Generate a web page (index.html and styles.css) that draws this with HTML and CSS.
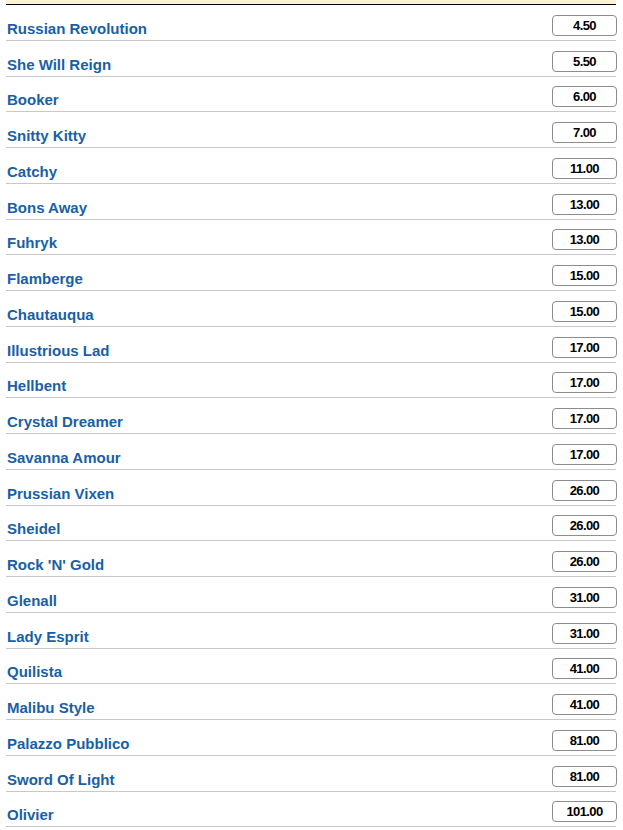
FILE: index.html
```html
<!DOCTYPE html>
<html lang="en">
<head>
    <meta charset="UTF-8">
    <meta name="viewport" content="width=device-width, initial-scale=1.0">
    <title>Runners</title>
    <link rel="stylesheet" href="styles.css">
</head>
<body>
    <div class="board">
        <div class="board-top"></div>
        <div class="runner"><span class="name">Russian Revolution</span><span class="odds">4.50</span></div>
        <div class="runner"><span class="name">She Will Reign</span><span class="odds">5.50</span></div>
        <div class="runner"><span class="name">Booker</span><span class="odds">6.00</span></div>
        <div class="runner"><span class="name">Snitty Kitty</span><span class="odds">7.00</span></div>
        <div class="runner"><span class="name">Catchy</span><span class="odds">11.00</span></div>
        <div class="runner"><span class="name">Bons Away</span><span class="odds">13.00</span></div>
        <div class="runner"><span class="name">Fuhryk</span><span class="odds">13.00</span></div>
        <div class="runner"><span class="name">Flamberge</span><span class="odds">15.00</span></div>
        <div class="runner"><span class="name">Chautauqua</span><span class="odds">15.00</span></div>
        <div class="runner"><span class="name">Illustrious Lad</span><span class="odds">17.00</span></div>
        <div class="runner"><span class="name">Hellbent</span><span class="odds">17.00</span></div>
        <div class="runner"><span class="name">Crystal Dreamer</span><span class="odds">17.00</span></div>
        <div class="runner"><span class="name">Savanna Amour</span><span class="odds">17.00</span></div>
        <div class="runner"><span class="name">Prussian Vixen</span><span class="odds">26.00</span></div>
        <div class="runner"><span class="name">Sheidel</span><span class="odds">26.00</span></div>
        <div class="runner"><span class="name">Rock 'N' Gold</span><span class="odds">26.00</span></div>
        <div class="runner"><span class="name">Glenall</span><span class="odds">31.00</span></div>
        <div class="runner"><span class="name">Lady Esprit</span><span class="odds">31.00</span></div>
        <div class="runner"><span class="name">Quilista</span><span class="odds">41.00</span></div>
        <div class="runner"><span class="name">Malibu Style</span><span class="odds">41.00</span></div>
        <div class="runner"><span class="name">Palazzo Pubblico</span><span class="odds">81.00</span></div>
        <div class="runner"><span class="name">Sword Of Light</span><span class="odds">81.00</span></div>
        <div class="runner"><span class="name">Olivier</span><span class="odds">101.00</span></div>
    </div>
</body>
</html>
```
FILE: styles.css
```css
body {
    margin: 0;
    background-color: #ffffff;
    font-family: "Liberation Sans", Arial, sans-serif;
}
.board {
    width: 610px;
    margin: 0 6px;
}
.board-top {
    height: 4px;
    background-color: #fdf3d2;
    border-bottom: 1px solid #000000;
}
.runner {
    display: flex;
    justify-content: space-between;
    align-items: flex-end;
    height: 35.75px;
    box-sizing: border-box;
    border-bottom: 1px solid #c8c8c8;
}
.name {
    padding-left: 1px;
    margin-bottom: 3px;
    font-size: 15px;
    line-height: 16px;
    font-weight: bold;
    color: #195fa6;
}
.odds {
    width: 65px;
    height: 21px;
    margin-right: -1px;
    margin-bottom: 4px;
    box-sizing: border-box;
    border: 1px solid #8c8c8c;
    border-radius: 4px;
    font-size: 13px;
    line-height: 19px;
    font-weight: bold;
    text-align: center;
    letter-spacing: -0.6px;
    color: #000000;
}
```
